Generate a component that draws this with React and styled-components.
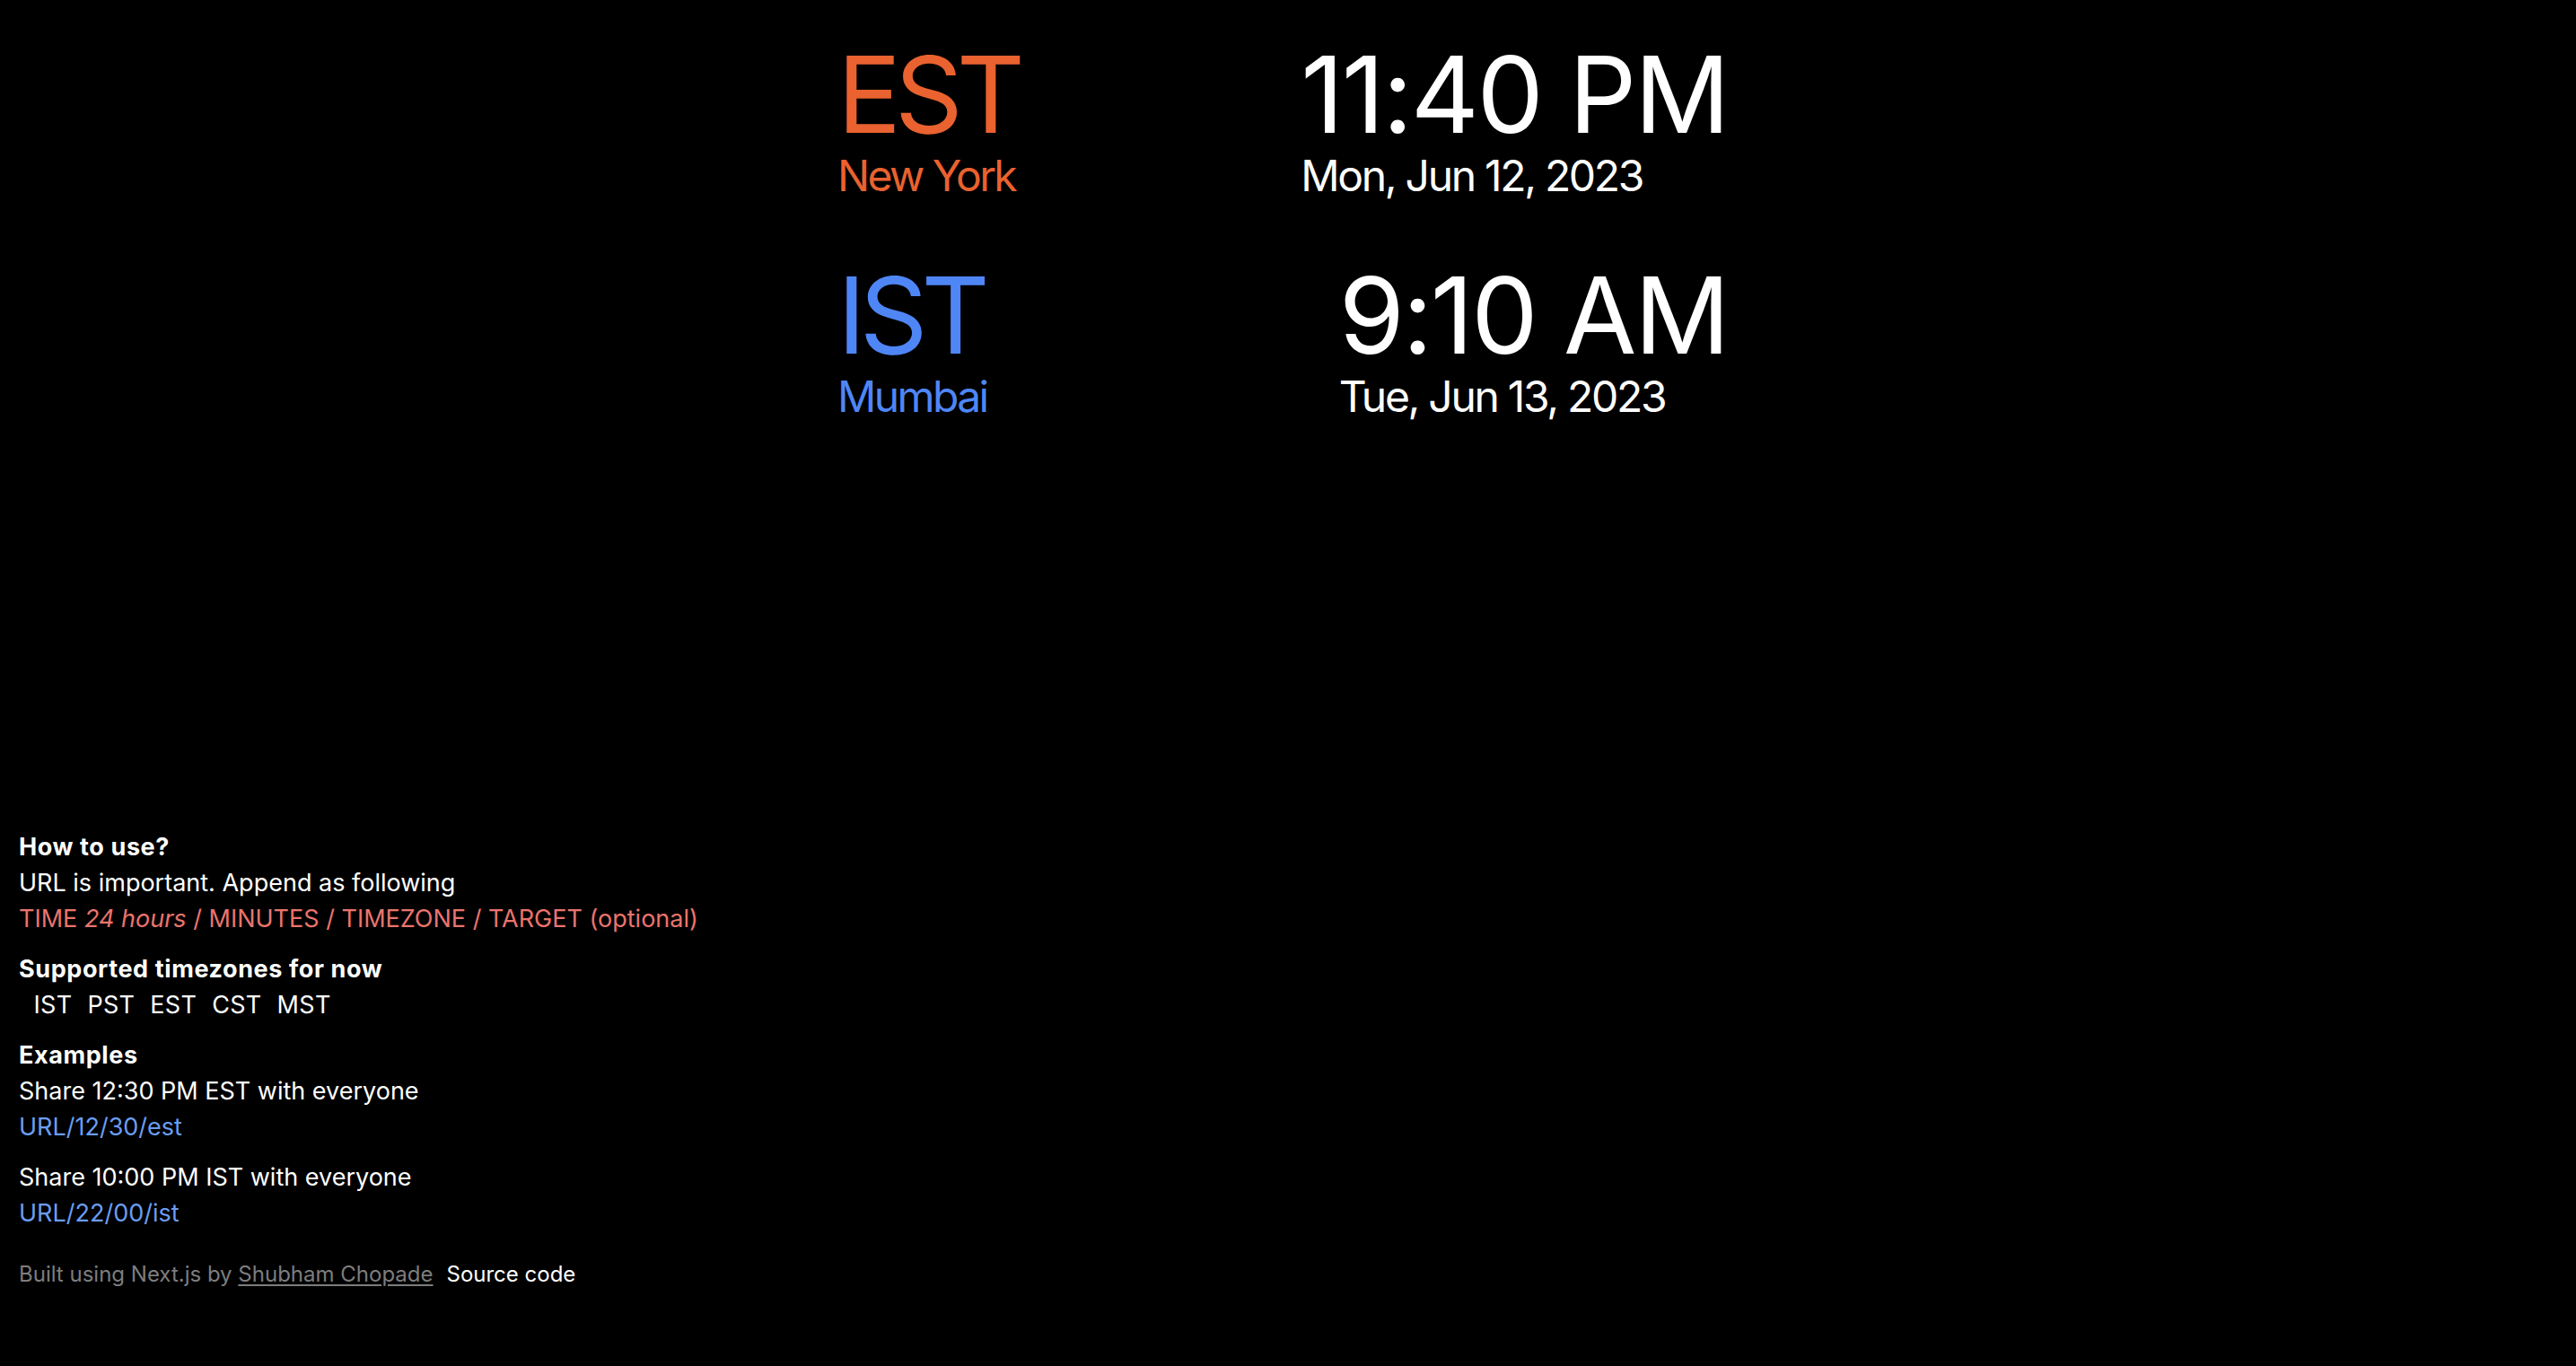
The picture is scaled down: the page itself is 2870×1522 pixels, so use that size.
import React from "react";
import styled, { createGlobalStyle } from "styled-components";

const GlobalStyle = createGlobalStyle`
  * {
    box-sizing: border-box;
  }
  html, body {
    margin: 0;
    padding: 0;
    background: #000;
  }
  body {
    font-family: Inter, "Noto Sans", "Liberation Sans", sans-serif;
    color: #fff;
  }
`;

const Page = styled.div`
  min-height: 100vh;
  display: flex;
  flex-direction: column;
  justify-content: space-between;
  padding: 46px 0 86px;
`;

const Board = styled.div`
  display: flex;
  flex-direction: column;
  align-items: center;
  gap: 64px;
  padding-right: 12px;
`;

const ClockRow = styled.div`
  width: 992px;
  display: flex;
  justify-content: space-between;
  align-items: flex-start;
`;

const Column = styled.div`
  display: flex;
  flex-direction: column;
  align-items: flex-start;
`;

const Zone = styled.div`
  font-size: 118px;
  line-height: 118px;
  letter-spacing: -7px;
  color: ${({ color }) => color};
`;

const City = styled.div`
  font-size: 48px;
  line-height: 64px;
  letter-spacing: -2.6px;
  color: ${({ color }) => color};
`;

const Time = styled.div`
  font-size: 118px;
  line-height: 118px;
  letter-spacing: -2.5px;
  color: #fff;
`;

const DateText = styled.div`
  font-size: 48px;
  line-height: 64px;
  letter-spacing: -2.3px;
  color: #fff;
`;

const Info = styled.div`
  padding-left: 21px;
  font-size: 27px;
  line-height: 40px;
`;

const Group = styled.div`
  margin-bottom: 16px;
`;

const Heading = styled.div`
  font-weight: 700;
  letter-spacing: 0.6px;
`;

const Line = styled.div`
  color: ${({ tone }) =>
    tone === "red" ? "#ea746d" : tone === "blue" ? "#6b9df2" : "#fff"};
`;

const ZoneList = styled.div`
  padding-left: 8px;
`;

const ZoneItem = styled.span`
  margin: 0 8.5px;
  letter-spacing: 0.3px;
`;

const Footer = styled.div`
  margin-top: 32px;
  font-size: 24px;
  line-height: 32px;
  color: #7d7d7d;
`;

const AuthorLink = styled.a`
  color: #7d7d7d;
  text-decoration: underline;
  text-underline-offset: 3px;
`;

const SourceLink = styled.a`
  margin-left: 15px;
  color: #fff;
  text-decoration: none;
`;

const clocks = [
  {
    zone: "EST",
    city: "New York",
    color: "#e9622f",
    time: "11:40 PM",
    date: "Mon, Jun 12, 2023",
  },
  {
    zone: "IST",
    city: "Mumbai",
    color: "#4f86f6",
    time: "9:10 AM",
    date: "Tue, Jun 13, 2023",
  },
];

const zones = ["IST", "PST", "EST", "CST", "MST"];

export default function App() {
  return (
    <>
      <GlobalStyle />
      <Page>
        <Board>
          {clocks.map((c) => (
            <ClockRow key={c.zone}>
              <Column>
                <Zone color={c.color}>{c.zone}</Zone>
                <City color={c.color}>{c.city}</City>
              </Column>
              <Column>
                <Time>{c.time}</Time>
                <DateText>{c.date}</DateText>
              </Column>
            </ClockRow>
          ))}
        </Board>

        <Info>
          <Group>
            <Heading>How to use?</Heading>
            <Line>URL is important. Append as following</Line>
            <Line tone="red">
              TIME <i>24 hours</i> / MINUTES / TIMEZONE / TARGET (optional)
            </Line>
          </Group>
          <Group>
            <Heading>Supported timezones for now</Heading>
            <ZoneList>
              {zones.map((z) => (
                <ZoneItem key={z}>{z}</ZoneItem>
              ))}
            </ZoneList>
          </Group>
          <Group>
            <Heading>Examples</Heading>
            <Line>Share 12:30 PM EST with everyone</Line>
            <Line tone="blue">URL/12/30/est</Line>
          </Group>
          <Group>
            <Line>Share 10:00 PM IST with everyone</Line>
            <Line tone="blue">URL/22/00/ist</Line>
          </Group>
          <Footer>
            Built using Next.js by <AuthorLink href="#">Shubham Chopade</AuthorLink>
            <SourceLink href="#">Source code</SourceLink>
          </Footer>
        </Info>
      </Page>
    </>
  );
}
